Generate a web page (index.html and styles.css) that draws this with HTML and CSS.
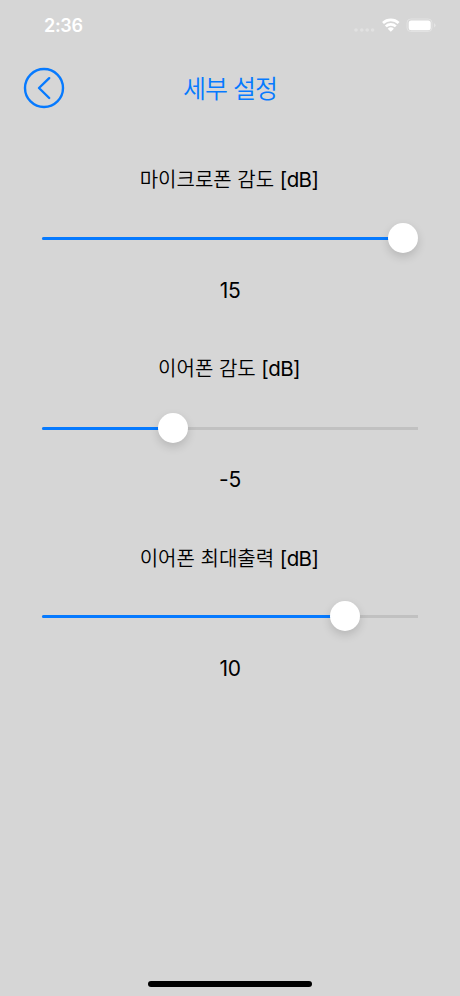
FILE: index.html
```html
<!DOCTYPE html>
<html lang="ko">
<head>
<meta charset="utf-8">
<title>세부 설정</title>
<link rel="stylesheet" href="styles.css">
</head>
<body>
<div class="screen">
  <div class="status">
    <span class="time">2:36</span>
    <svg class="status-icons" width="84" height="20" viewBox="0 0 84 20">
      <g fill="#fff">
        <g opacity=".28"><circle cx="4" cy="15" r="1.8"/><circle cx="9.8" cy="15" r="1.8"/><circle cx="15.2" cy="15" r="1.8"/><circle cx="20.6" cy="15" r="1.8"/></g>
        <path d="M38.8 16.8l-3.1-3.1a4.6 4.6 0 0 1 6.2 0z"/>
      </g>
      <path d="M33.8 11.4a7.2 7.2 0 0 1 10 0M31 8a11.3 11.3 0 0 1 15.6 0" fill="none" stroke="#fff" stroke-width="2.7"/>
      <rect x="55" y="4" width="25" height="12.5" rx="3.8" fill="none" stroke="#fff" stroke-opacity=".3"/>
      <rect x="56.7" y="5.4" width="22" height="9.8" rx="2.5" fill="#fff"/>
      <path d="M82 8.2q1.6.7 1.6 2.1t-1.6 2.1z" fill="#fff" opacity=".35"/>
    </svg>
  </div>
  <header class="header">
    <svg class="back" width="42" height="42" viewBox="0 0 42 42" fill="none" stroke="#067aff" stroke-width="2.4" stroke-linecap="round" stroke-linejoin="round"><circle cx="21" cy="21" r="19"/><path d="M26.2 11.2L16 21L26.2 31"/></svg>
    <h1 class="title">세부 설정</h1>
  </header>
  <main>
    <section class="setting">
      <h2 class="label">마이크로폰 감도 <span class="unit">[dB]</span></h2>
      <div class="slider"><div class="fill" style="width:360px"></div><div class="thumb"></div></div>
      <p class="value">15</p>
    </section>
    <section class="setting">
      <h2 class="label">이어폰 감도 <span class="unit">[dB]</span></h2>
      <div class="slider"><div class="fill" style="width:130px"></div><div class="thumb"></div></div>
      <p class="value">-5</p>
    </section>
    <section class="setting">
      <h2 class="label">이어폰 최대출력 <span class="unit">[dB]</span></h2>
      <div class="slider"><div class="fill" style="width:302px"></div><div class="thumb"></div></div>
      <p class="value">10</p>
    </section>
  </main>
  <div class="home"></div>
</div>
</body>
</html>
```
FILE: styles.css
```css
* { box-sizing: border-box; }
body { margin: 0; font-family: Inter, "Noto Sans CJK KR", sans-serif; }
h1, h2, p { margin: 0; font-weight: 400; }
.screen { width: 460px; height: 996px; background: #d6d6d6; display: flex; flex-direction: column; overflow: hidden; }
.status { height: 67px; padding: 15px 24px 0 44px; display: flex; justify-content: space-between; align-items: flex-start; }
.time { color: #fff; font-size: 18px; line-height: 22px; font-weight: 600; letter-spacing: -.3px; }
.header { height: 42px; display: grid; grid-template-columns: 42px 1fr 42px; align-items: center; padding: 0 23px; }
.title { color: #067aff; text-align: center; font-size: 25px; line-height: 36px; letter-spacing: -1px; padding-top: 2px; font-weight: 350; }
main { padding: 56px 42px 0; flex: 1; }
.setting { height: 189px; text-align: center; }
.setting:nth-child(2) .slider { margin-top: 1px; margin-bottom: -1px; }
.setting:nth-child(3) .label { padding-top: 1px; }
.label { font-size: 20px; line-height: 30px; height: 58px; padding-right: 2px; white-space: nowrap; font-weight: 350; }
.unit { font-size: 20.5px; font-weight: 400; letter-spacing: -.6px; }
.slider { height: 30px; display: flex; align-items: center; border-radius: 2px; background: linear-gradient(#c1c1c1, #c1c1c1) center / 100% 3px no-repeat; }
.fill { height: 3px; background: #067aff; border-radius: 2px; flex: none; }
.thumb { width: 30px; height: 30px; border-radius: 50%; background: #fff; box-shadow: 0 4px 10px rgba(0,0,0,.15); margin-left: -14.4px; }
.value { font-size: 21px; line-height: 30px; margin-top: 22px; padding-top: 1px; letter-spacing: -.3px; }
.home { width: 164px; height: 6px; background: #000; border-radius: 3px; margin: 0 auto 9px; }
```
